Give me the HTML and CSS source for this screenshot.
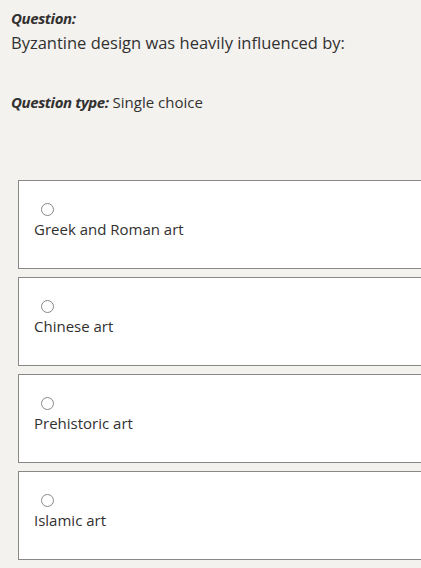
FILE: index.html
```html
<!DOCTYPE html>
<html>
<head>
<meta charset="utf-8">
<link rel="stylesheet" href="styles.css">
</head>
<body>
<div class="page">
  <div class="q-label">Question:</div>
  <div class="q-text">Byzantine design was heavily influenced by:</div>
  <div class="q-type"><span class="q-label">Question type:</span> Single choice</div>
  <div class="options">
    <div class="option"><span class="radio"></span><div class="opt-text">Greek and Roman art</div></div>
    <div class="option"><span class="radio"></span><div class="opt-text">Chinese art</div></div>
    <div class="option"><span class="radio"></span><div class="opt-text">Prehistoric art</div></div>
    <div class="option"><span class="radio"></span><div class="opt-text">Islamic art</div></div>
  </div>
</div>
</body>
</html>
```

FILE: styles.css
```css
html, body {
  margin: 0;
  padding: 0;
  background: #f3f2ef;
}
body {
  font-family: "Open Sans", "Noto Sans", sans-serif;
  color: #323130;
  font-size: 15px;
  overflow: hidden;
}
.page {
  padding: 8px 0 0 11px;
}
.q-label {
  font-weight: 700;
  font-style: italic;
  letter-spacing: -0.4px;
  line-height: 20px;
}
.q-text {
  margin-top: 4px;
  line-height: 22px;
  font-size: 16.5px;
}
.q-type {
  margin-top: 38px;
  line-height: 20px;
}
.options {
  margin-top: 68px;
  margin-left: 7px;
  margin-right: -20px;
  display: flex;
  flex-direction: column;
  gap: 8px;
}
.option {
  background: #fff;
  border: 1px solid #8a8886;
  box-sizing: border-box;
  height: 89px;
  padding: 22px 0 0 15px;
}
.radio {
  display: block;
  width: 11px;
  height: 11px;
  border: 1px solid #8a8886;
  border-radius: 50%;
  margin-left: 7px;
}
.opt-text {
  margin-top: 3px;
  line-height: 20px;
}
```
